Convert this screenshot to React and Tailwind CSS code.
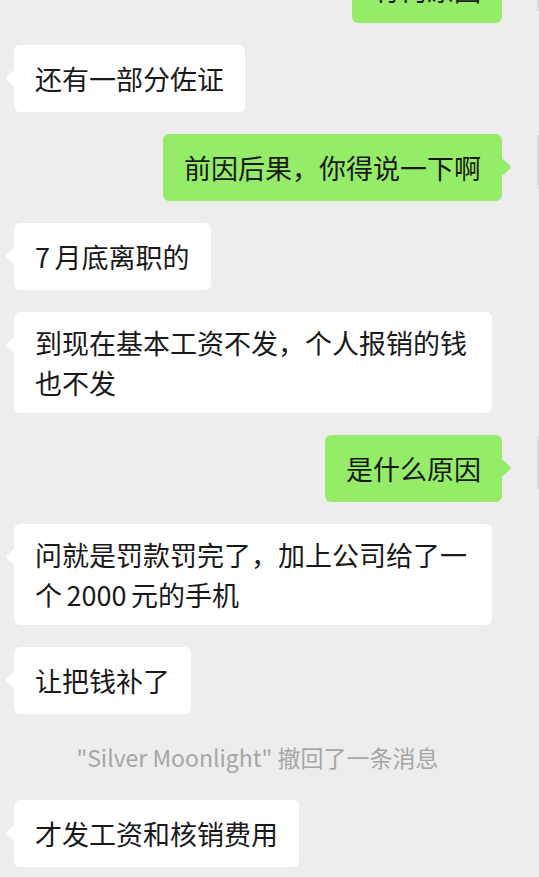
import React from 'react';

const messages = [
  { side: 'right', text: '有何原因', first: true },
  { side: 'left', text: '还有一部分佐证' },
  { side: 'right', text: '前因后果，你得说一下啊' },
  { side: 'left', text: '7\u2006月底离职的' },
  { side: 'left', text: '到现在基本工资不发，个人报销的钱也不发', multi: true },
  { side: 'right', text: '是什么原因' },
  { side: 'left', text: '问就是罚款罚完了，加上公司给了一个\u20062000\u2006元的手机', multi: true },
  { side: 'left', text: '让把钱补了' },
  { side: 'system', text: '"Silver Moonlight" 撤回了一条消息' },
  { side: 'left', text: '才发工资和核销费用' },
];

const font = { fontFamily: '"Noto Sans CJK SC", "Noto Sans", sans-serif' };

const Bubble = ({ msg }) => {
  const isRight = msg.side === 'right';
  return (
    <div
      className={`relative max-w-[478px] rounded-[6px] px-[21px] text-[27px] leading-[40px] text-[#191919] ${
        msg.multi ? 'py-[10.5px]' : 'py-[13.5px]'
      } ${isRight ? 'bg-[#95ec69]' : 'bg-white'}`}
    >
      {/* tail */}
      <span
        className={`absolute top-[27px] h-[12px] w-[12px] rotate-45 rounded-[2px] ${
          isRight ? 'right-[-6.5px] bg-[#95ec69]' : 'left-[-6.5px] bg-white'
        }`}
      />
      <span className="relative">{msg.text}</span>
    </div>
  );
};

export default function App() {
  return (
    <div className="h-[877px] w-[539px] overflow-hidden bg-[#ededed]" style={font}>
      <div className="-mt-[44px] flex flex-col gap-[22px]">
        {messages.map((msg, i) => {
          if (msg.side === 'system') {
            return (
              <div
                key={i}
                className="my-[7px] pr-[24px] text-center text-[23px] leading-[28px] text-[#a6a6a6]"
              >
                {msg.text}
              </div>
            );
          }
          if (msg.side === 'right') {
            return (
              <div key={i} className="flex justify-end">
                <Bubble msg={msg} />
                <div className="ml-[35px] -mr-[54px] h-[56px] w-[56px] shrink-0 rounded-[4px] bg-[#d9d9d9]" />
              </div>
            );
          }
          return (
            <div key={i} className="flex justify-start pl-[14px]">
              <Bubble msg={msg} />
            </div>
          );
        })}
      </div>
    </div>
  );
}
